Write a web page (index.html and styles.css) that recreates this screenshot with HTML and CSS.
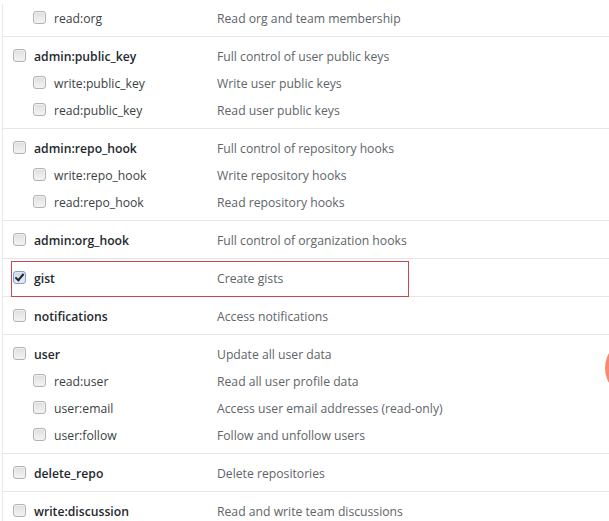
FILE: index.html
```html
<!DOCTYPE html>
<html lang="en">
<head>
<meta charset="utf-8">
<title>Scopes</title>
<link rel="stylesheet" href="styles.css">
</head>
<body>
<div class="scopes">
  <div class="group group-first">
    <label class="row child"><span class="name"><input type="checkbox" class="cb"><span class="txt">read:org</span></span><span class="desc">Read org and team membership</span></label>
  </div>
  <div class="group">
    <label class="row"><span class="name"><input type="checkbox" class="cb"><span class="txt">admin:public_key</span></span><span class="desc">Full control of user public keys</span></label>
    <label class="row child"><span class="name"><input type="checkbox" class="cb"><span class="txt">write:public_key</span></span><span class="desc">Write user public keys</span></label>
    <label class="row child"><span class="name"><input type="checkbox" class="cb"><span class="txt">read:public_key</span></span><span class="desc">Read user public keys</span></label>
  </div>
  <div class="group">
    <label class="row"><span class="name"><input type="checkbox" class="cb"><span class="txt">admin:repo_hook</span></span><span class="desc">Full control of repository hooks</span></label>
    <label class="row child"><span class="name"><input type="checkbox" class="cb"><span class="txt">write:repo_hook</span></span><span class="desc">Write repository hooks</span></label>
    <label class="row child"><span class="name"><input type="checkbox" class="cb"><span class="txt">read:repo_hook</span></span><span class="desc">Read repository hooks</span></label>
  </div>
  <div class="group">
    <label class="row"><span class="name"><input type="checkbox" class="cb"><span class="txt">admin:org_hook</span></span><span class="desc">Full control of organization hooks</span></label>
  </div>
  <div class="group highlighted">
    <label class="row"><span class="name"><input type="checkbox" class="cb" checked><span class="txt">gist</span></span><span class="desc">Create gists</span></label>
    <span class="highlight"></span>
  </div>
  <div class="group">
    <label class="row"><span class="name"><input type="checkbox" class="cb"><span class="txt">notifications</span></span><span class="desc">Access notifications</span></label>
  </div>
  <div class="group">
    <label class="row"><span class="name"><input type="checkbox" class="cb"><span class="txt">user</span></span><span class="desc">Update all user data</span></label>
    <label class="row child"><span class="name"><input type="checkbox" class="cb"><span class="txt">read:user</span></span><span class="desc">Read all user profile data</span></label>
    <label class="row child"><span class="name"><input type="checkbox" class="cb"><span class="txt">user:email</span></span><span class="desc">Access user email addresses (read-only)</span></label>
    <label class="row child"><span class="name"><input type="checkbox" class="cb"><span class="txt">user:follow</span></span><span class="desc">Follow and unfollow users</span></label>
  </div>
  <div class="group">
    <label class="row"><span class="name"><input type="checkbox" class="cb"><span class="txt">delete_repo</span></span><span class="desc">Delete repositories</span></label>
  </div>
  <div class="group group-last">
    <label class="row"><span class="name"><input type="checkbox" class="cb"><span class="txt">write:discussion</span></span><span class="desc">Read and write team discussions</span></label>
  </div>
</div>
<div class="fab"></div>
</body>
</html>
```

FILE: styles.css
```css
html, body {
  margin: 0;
  padding: 0;
  background: #fff;
  overflow: hidden;
}
body {
  font-family: "Open Sans", "Noto Sans", sans-serif;
  font-size: 12.2px;
  color: #24292e;
  width: 609px;
  height: 521px;
  position: relative;
}
.scopes {
  margin: 4px 0 0 2px;
  border-left: 1px solid #e8e8e8;
  height: 517px;
  overflow: hidden;
}
.group {
  border-top: 1px solid #e6e6e6;
  padding: 5px 0 5px 10px;
  position: relative;
}
.group-first {
  border-top: 0;
  padding-top: 0;
}
.group-last {
  padding-bottom: 0;
}
.highlighted {
  z-index: 2;
}
.row {
  display: grid;
  grid-template-columns: 204px 1fr;
  align-items: center;
  height: 27px;
}
.name {
  display: flex;
  align-items: center;
  gap: 8px;
  font-weight: 600;
  color: #24292e;
}
.row.child .name {
  padding-left: 20px;
  font-weight: 400;
  color: #3a3f44;
}
.txt {
  position: relative;
  top: 1px;
}
.desc {
  color: #606569;
  position: relative;
  top: 1px;
}
.cb {
  appearance: none;
  -webkit-appearance: none;
  margin: 0;
  width: 13px;
  height: 13px;
  border: 1px solid #b3b3b3;
  border-radius: 3px;
  background: linear-gradient(#dedede, #f4f4f4);
  box-shadow: inset 0 0 0 1px #f0f0f0;
  position: relative;
  top: 0;
  flex: none;
}
.cb:checked {
  border-color: #7b9fd4;
  background: linear-gradient(#cfd6e2, #e9edf3);
  box-shadow: inset 0 0 0 1px #dfe6f1;
}
.cb:checked::after {
  content: "";
  position: absolute;
  left: 3px;
  top: 0;
  width: 3px;
  height: 7px;
  border-right: 2px solid #222;
  border-bottom: 2px solid #222;
  transform: rotate(40deg);
}
.highlight {
  position: absolute;
  left: 8px;
  top: 2px;
  width: 396px;
  height: 34px;
  border: 1px solid #c8474f;
  pointer-events: none;
}
.fab {
  position: absolute;
  left: 605px;
  top: 338px;
  width: 4px;
  height: 60px;
  overflow: hidden;
}
.fab::before {
  content: "";
  display: block;
  width: 60px;
  height: 60px;
  border-radius: 50%;
  background: #f58c6f;
}
```
